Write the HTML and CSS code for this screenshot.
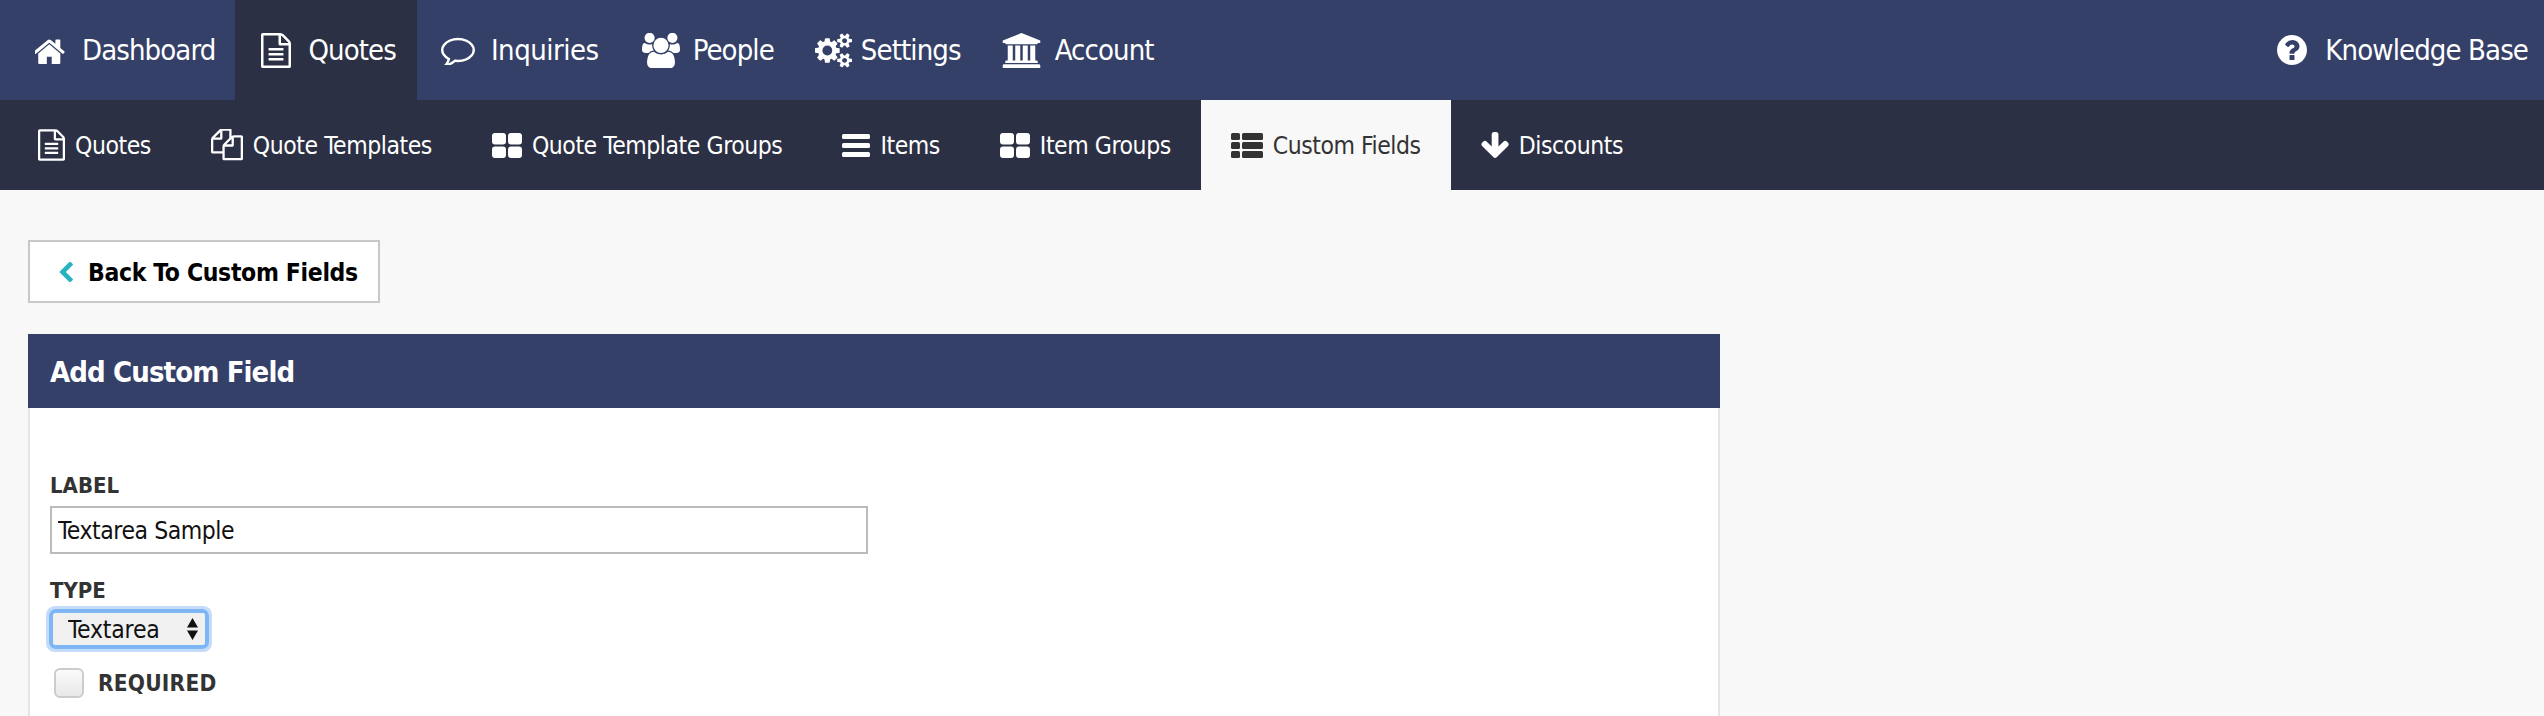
FILE: index.html
```html
<!DOCTYPE html>
<html lang="en">
<head>
<meta charset="utf-8">
<title>Add Custom Field</title>
<link rel="stylesheet" href="styles.css">
</head>
<body>
<svg class="sprite" xmlns="http://www.w3.org/2000/svg">
  <symbol id="i-home" viewBox="96 128 1600 1408"><path d="M1408 992v480q0 26-19 45t-45 19h-384v-384h-256v384h-384q-26 0-45-19t-19-45v-480q0-1 .5-3t.5-3l575-474 575 474q1 2 1 6zm223-69l-62 74q-8 9-21 11h-3q-13 0-21-7l-692-577-692 577q-12 8-24 7-13-2-21-11l-62-74q-8-10-7-23.5t11-21.5l719-599q32-26 76-26t76 26l244 204v-195q0-14 9-23t23-9h192q14 0 23 9t9 23v408l219 182q10 8 11 21.5t-7 23.5z"/></symbol>
  <symbol id="i-file" viewBox="128 0 1536 1792"><path d="M1596 380q28 28 48 76t20 88v1152q0 40-28 68t-68 28h-1344q-40 0-68-28t-28-68v-1600q0-40 28-68t68-28h896q40 0 88 20t76 48zm-444-244v376h376q-10-29-22-41l-313-313q-12-12-41-22zm384 1528v-1024h-416q-40 0-68-28t-28-68v-416h-768v1536h1280zm-1024-864q0-14 9-23t23-9h704q14 0 23 9t9 23v64q0 14-9 23t-23 9h-704q-14 0-23-9t-9-23v-64zm736 224q14 0 23 9t9 23v64q0 14-9 23t-23 9h-704q-14 0-23-9t-9-23v-64q0-14 9-23t23-9h704zm0 256q14 0 23 9t9 23v64q0 14-9 23t-23 9h-704q-14 0-23-9t-9-23v-64q0-14 9-23t23-9h704z"/></symbol>
  <symbol id="i-comment" viewBox="0 128 1792 1536"><path d="M896 384q-204 0-381.500 69.500t-282 187.500-104.500 255q0 112 71.500 213.500t201.500 175.500l87 50-27 96q-24 91-70 172 152-63 275-171l43-38 57 6q69 8 130 8 204 0 381.500-69.500t282-187.500 104.500-255-104.500-255-282-187.500-381.500-69.500zm896 512q0 174-120 321.500t-326 233-450 85.500q-70 0-145-8-198 175-460 242-49 14-114 22h-5q-15 0-27-10.500t-16-27.500v-1q-3-4-.5-12t2-10 4.500-9.500l6-9 7-8.500 8-9q7-8 31-34.500t34.500-38 31-39.500 32.500-51 27-59 26-76q-157-89-247.500-220t-90.500-281q0-174 120-321.500t326-233 450-85.500 450 85.500 326 233 120 321.500z"/></symbol>
  <symbol id="i-users" viewBox="0 64 1920 1664"><path d="M593 896q-162 5-265 128h-134q-82 0-138-40.500t-56-118.500q0-353 124-353 6 0 43.500 21t97.500 42.500 119 21.500q67 0 133-23-5 37-5 66 0 139 81 256zm1071 637q0 120-73 189.500t-194 69.500h-874q-121 0-194-69.500t-73-189.500q0-53 3.500-103.500t14-109 26.500-108.500 43-97.500 62-81 85.500-53.500 111.500-20q10 0 43 21.500t73 48 107 48 135 21.500 135-21.500 107-48 73-48 43-21.500q61 0 111.500 20t85.500 53.500 62 81 43 97.500 26.500 108.500 14 109 3.500 103.500zm-1024-1277q0 106-75 181t-181 75-181-75-75-181 75-181 181-75 181 75 75 181zm704 384q0 159-112.500 271.500t-271.500 112.500-271.500-112.500-112.500-271.500 112.500-271.500 271.500-112.500 271.500 112.500 112.500 271.500zm576 225q0 78-56 118.500t-138 40.500h-134q-103-123-265-128 81-117 81-256 0-29-5-66 66 23 133 23 59 0 119-21.500t97.500-42.500 43.500-21q124 0 124 353zm-128-609q0 106-75 181t-181 75-181-75-75-181 75-181 181-75 181 75 75 181z"/></symbol>
  <symbol id="i-cogs" viewBox="0 0 1920 1792"><path d="M896 896q0-106-75-181t-181-75-181 75-75 181 75 181 181 75 181-75 75-181zm768 512q0-52-38-90t-90-38-90 38-38 90q0 53 37.500 90.500t90.500 37.500 90.500-37.500 37.500-90.500zm0-1024q0-52-38-90t-90-38-90 38-38 90q0 53 37.500 90.500t90.500 37.500 90.500-37.500 37.500-90.500zm-384 421v185q0 10-7 19.500t-16 10.500l-155 24q-11 35-32 76 34 48 90 115 7 11 7 20 0 12-7 19-23 30-82.500 89.500t-78.500 59.500q-11 0-21-7l-115-90q-37 19-77 31-11 108-23 155-7 24-30 24h-186q-11 0-20-7.500t-10-17.500l-23-153q-34-10-75-31l-118 89q-7 7-20 7-11 0-21-8-144-133-144-160 0-9 7-19 10-14 41-53t47-61q-23-44-35-82l-152-24q-10-1-17-9.500t-7-19.500v-185q0-10 7-19.500t16-10.500l155-24q11-35 32-76-34-48-90-115-7-11-7-20 0-12 7-20 22-30 82-89t79-59q11 0 21 7l115 90q34-18 77-32 11-108 23-154 7-24 30-24h186q11 0 20 7.500t10 17.500l23 153q34 10 75 31l118-89q8-7 20-7 11 0 21 8 144 133 144 160 0 8-7 19-12 16-42 54t-45 60q23 48 34 82l152 23q10 2 17 10.500t7 19.500zm640 533v140q0 16-149 31-12 27-30 52 51 113 51 138 0 4-4 7-122 71-124 71-8 0-46-47t-52-68q-20 2-30 2t-30-2q-14 21-52 68t-46 47q-2 0-124-71-4-3-4-7 0-25 51-138-18-25-30-52-149-15-149-31v-140q0-16 149-31 13-29 30-52-51-113-51-138 0-4 4-7 4-2 35-20t59-34 30-16q8 0 46 46.500t52 67.500q20-2 30-2t30 2q51-71 92-112l6-2q4 0 124 70 4 3 4 7 0 25-51 138 17 23 30 52 149 15 149 31zm0-1024v140q0 16-149 31-12 27-30 52 51 113 51 138 0 4-4 7-122 71-124 71-8 0-46-47t-52-68q-20 2-30 2t-30-2q-14 21-52 68t-46 47q-2 0-124-71-4-3-4-7 0-25 51-138-18-25-30-52-149-15-149-31v-140q0-16 149-31 13-29 30-52-51-113-51-138 0-4 4-7 4-2 35-20t59-34 30-16q8 0 46 46.500t52 67.500q20-2 30-2t30 2q51-71 92-112l6-2q4 0 124 70 4 3 4 7 0 25-51 138 17 23 30 52 149 15 149 31z"/></symbol>
  <symbol id="i-bank" viewBox="0 0 1920 1792"><path d="M960 0l960 384v128h-128q0 26-20.500 45t-48.500 19h-1526q-28 0-48.500-19t-20.500-45h-128v-128zm-704 640h256v768h128v-768h256v768h128v-768h256v768h128v-768h256v768h59q28 0 48.500 19t20.500 45v64h-1664v-64q0-26 20.500-45t48.500-19h59v-768zm1595 960q28 0 48.500 19t20.500 45v128h-1920v-128q0-26 20.500-45t48.500-19h1782z"/></symbol>
  <symbol id="i-help" viewBox="128 128 1536 1536"><path d="M1024 1376v-192q0-14-9-23t-23-9h-192q-14 0-23 9t-9 23v192q0 14 9 23t23 9h192q14 0 23-9t9-23zm256-672q0-88-55.500-163t-138.500-116-170-41q-243 0-371 213-15 24 8 42l132 100q7 6 19 6 16 0 25-12 53-68 86-92 34-24 86-24 48 0 85.500 26t37.500 59q0 38-20 61t-68 45q-63 28-115.500 86.500t-52.500 125.500v36q0 14 9 23t23 9h192q14 0 23-9t9-23q0-19 21.500-49.500t54.500-49.500q32-18 49-28.500t46-35 44.500-48 28-60.500 12.500-81zm384 192q0 209-103 385.500t-279.500 279.500-385.500 103-385.500-103-279.500-279.500-103-385.500 103-385.500 279.500-279.500 385.500-103 385.500 103 279.500 279.500 103 385.500z"/></symbol>
  <symbol id="i-files" viewBox="0 128 1792 1664"><path d="M1696 384q40 0 68 28t28 68v1216q0 40-28 68t-68 28h-960q-40 0-68-28t-28-68v-288h-544q-40 0-68-28t-28-68v-672q0-40 20-88t48-76l408-408q28-28 76-48t88-20h416q40 0 68 28t28 68v328q68-40 128-40h416zm-544 213l-299 299h299v-299zm-640-384l-299 299h299v-299zm196 647l316-316v-416h-384v416q0 40-28 68t-68 28h-416v640h512v-256q0-40 20-88t48-76zm956 804v-1152h-384v416q0 40-28 68t-68 28h-416v640h896z"/></symbol>
  <symbol id="i-grid" viewBox="0 0 30 25"><rect width="14" height="11.500" rx="3"/><rect x="16" width="14" height="11.500" rx="3"/><rect y="13.500" width="14" height="11.500" rx="3"/><rect x="16" y="13.500" width="14" height="11.500" rx="3"/></symbol>
  <symbol id="i-bars" viewBox="0 0 28 23"><rect width="28" height="5" rx="1.500"/><rect y="9" width="28" height="5" rx="1.500"/><rect y="18" width="28" height="5" rx="1.500"/></symbol>
  <symbol id="i-list" viewBox="0 0 32 25"><rect width="9" height="7" rx="1.500"/><rect x="11" width="21" height="7" rx="1.500"/><rect y="9" width="9" height="7" rx="1.500"/><rect x="11" y="9" width="21" height="7" rx="1.500"/><rect y="18" width="9" height="7" rx="1.500"/><rect x="11" y="18" width="21" height="7" rx="1.500"/></symbol>
  <symbol id="i-down" viewBox="110 128 1565 1483"><path d="M1675 832q0 53-37 90l-651 652q-39 37-91 37-53 0-90-37l-651-652q-38-36-38-90 0-53 38-91l74-75q39-37 91-37 53 0 90 37l294 294v-704q0-52 38-90t90-38h128q52 0 90 38t38 90v704l294-294q37-37 90-37 52 0 91 37l75 75q37 39 37 91z"/></symbol>
  <symbol id="i-back" viewBox="365 128 1081 1408"><path d="M1427 301l-531 531 531 531q19 19 19 45t-19 45l-166 166q-19 19-45 19t-45-19l-742-742q-19-19-19-45t19-45l742-742q19-19 45-19t45 19l166 166q19 19 19 45t-19 45z"/></symbol>
</svg>

<header class="topnav">
  <a class="topnav__item topnav__item--first">
    <svg class="icon icon--home"><use href="#i-home"/></svg><span>Dashboard</span>
  </a>
  <a class="topnav__item topnav__item--active">
    <svg class="icon icon--topfile"><use href="#i-file"/></svg><span>Quotes</span>
  </a>
  <a class="topnav__item topnav__item--inquiries">
    <svg class="icon icon--comment"><use href="#i-comment"/></svg><span>Inquiries</span>
  </a>
  <a class="topnav__item topnav__item--people">
    <svg class="icon icon--users"><use href="#i-users"/></svg><span>People</span>
  </a>
  <a class="topnav__item topnav__item--settings">
    <svg class="icon icon--cogs"><use href="#i-cogs"/></svg><span>Settings</span>
  </a>
  <a class="topnav__item">
    <svg class="icon icon--bank"><use href="#i-bank"/></svg><span>Account</span>
  </a>
  <a class="topnav__item topnav__item--help">
    <svg class="icon icon--help"><use href="#i-help"/></svg><span>Knowledge Base</span>
  </a>
</header>

<nav class="subnav">
  <a class="subnav__item subnav__item--first"><svg class="icon icon--subfile"><use href="#i-file"/></svg><span>Quotes</span></a>
  <a class="subnav__item"><svg class="icon icon--files"><use href="#i-files"/></svg><span>Quote Templates</span></a>
  <a class="subnav__item"><svg class="icon icon--grid"><use href="#i-grid"/></svg><span>Quote Template Groups</span></a>
  <a class="subnav__item"><svg class="icon icon--bars"><use href="#i-bars"/></svg><span>Items</span></a>
  <a class="subnav__item"><svg class="icon icon--grid"><use href="#i-grid"/></svg><span>Item Groups</span></a>
  <a class="subnav__item subnav__item--active"><svg class="icon icon--list"><use href="#i-list"/></svg><span>Custom Fields</span></a>
  <a class="subnav__item"><svg class="icon icon--down"><use href="#i-down"/></svg><span>Discounts</span></a>
</nav>

<main class="content">
  <a class="back-button"><svg class="icon icon--back"><use href="#i-back"/></svg><span>Back To Custom Fields</span></a>

  <section class="panel">
    <h2 class="panel__title">Add Custom Field</h2>
    <form class="panel__body">
      <label class="field-label" for="label">LABEL</label>
      <input class="text-input" id="label" type="text" value="Textarea Sample">
      <label class="field-label field-label--type" for="type">TYPE</label>
      <div class="select-box">
        <select class="select-box__control" id="type"><option>Textarea</option></select>
        <svg class="select-box__arrows" viewBox="0 0 11 22"><path d="M5.500 0L11 9.500H0zM0 12.500h11L5.500 22z"/></svg>
      </div>
      <label class="check-row">
        <input class="check-row__box" type="checkbox">
        <span class="check-row__text">REQUIRED</span>
      </label>
    </form>
  </section>
</main>
</body>
</html>
```

FILE: styles.css
```css
* { box-sizing: border-box; }
html, body { margin: 0; height: 100%; overflow: hidden; }
body {
  display: flex;
  flex-direction: column;
  background: #f8f8f8;
  color: #333;
  font-family: "DejaVu Sans Condensed", "DejaVu Sans", sans-serif;
}
.sprite { width: 0; height: 0; position: absolute; }
.icon { fill: currentColor; flex: none; display: block; }

.topnav { display: flex; height: 100px; background: #354068; color: #fff; font-size: 29px; letter-spacing: -0.9px; }
.topnav__item { display: flex; align-items: center; padding: 0 20px 0 21px; gap: 14px; }
.topnav__item--first { padding-left: 35px; gap: 16px; padding-right: 20px; }
.topnav__item--active { background: #2c3044; padding: 0 21px 0 26px; gap: 17px; }
.topnav__item--inquiries { padding: 0 22px 0 24px; gap: 16px; letter-spacing: -0.5px; }
.topnav__item--people { gap: 13px; }
.topnav__item--settings { gap: 9px; }
.topnav__item--help { margin-left: auto; padding-right: 16px; gap: 18px; }

.icon--home { width: 31px; height: 27px; }
.icon--topfile { width: 30px; height: 35px; }
.icon--comment { width: 34px; height: 30px; }
.icon--users { width: 38px; height: 35px; }
.icon--cogs { width: 37px; height: 35px; }
.icon--bank { width: 39px; height: 35px; }
.icon--help { width: 30px; height: 30px; }

.subnav { display: flex; height: 90px; background: #2c3044; color: #fff; font-size: 24.5px; letter-spacing: -0.44px; }
.subnav__item { display: flex; align-items: center; gap: 10px; padding: 0 30px; }
.subnav__item--first { padding-left: 38px; }
.subnav__item--active { background: #f8f8f8; color: #333; }

.icon--subfile { width: 27px; height: 32px; }
.icon--files { width: 32px; height: 33px; }
.icon--grid { width: 30px; height: 25px; }
.icon--bars { width: 28px; height: 23px; }
.icon--list { width: 32px; height: 25px; }
.icon--down { width: 28px; height: 26px; }

.content { flex: 1; display: flex; flex-direction: column; align-items: flex-start; padding: 50px 824px 0 28px; min-height: 0; }

.back-button {
  display: flex;
  align-items: center;
  gap: 15px;
  width: 352px;
  height: 63px;
  padding: 1px 0 0 29px;
  background: #fff;
  border: 2px solid #c8c8c8;
  color: #000;
  font-size: 24.5px;
  font-weight: 700;
  letter-spacing: -0.34px;
}
.icon--back { width: 14px; height: 20px; color: #26b5c0; }

.panel { flex: 1; width: 100%; margin-top: 31px; display: flex; flex-direction: column; background: #fff; }
.panel__title {
  margin: 0;
  height: 74px;
  padding: 2px 22px 0;
  display: flex;
  align-items: center;
  background: #354068;
  color: #fff;
  font-size: 29px;
  font-weight: 700;
  letter-spacing: -0.9px;
}
.panel__body {
  flex: 1;
  display: flex;
  flex-direction: column;
  align-items: flex-start;
  padding: 63px 20px 0;
  border: 2px solid #e6e6e6;
  border-width: 0 2px;
}

.field-label { font-size: 22px; font-weight: 700; line-height: 30px; color: #333; }
.field-label--type { margin-top: 22px; }

.text-input {
  display: block;
  width: 818px;
  height: 48px;
  margin-top: 5px;
  padding: 0 6px;
  border: 2px solid #bbb;
  background: #fff;
  color: #111;
  font: 400 24.5px "DejaVu Sans Condensed", "DejaVu Sans", sans-serif;
  letter-spacing: -0.45px;
}

.select-box {
  position: relative;
  width: 152px;
  height: 32px;
  margin: 7px 0 0 3px;
  border-radius: 3px;
  box-shadow: 0 0 0 4px #7db5f5, 0 0 0 7px #c4dcfa;
}
.select-box__control {
  display: block;
  width: 100%;
  height: 100%;
  padding: 0 36px 0 15px;
  appearance: none;
  border: 0;
  border-radius: 3px;
  background: #f0f0f0;
  color: #111;
  outline: 0;
  font: 400 24.5px "DejaVu Sans Condensed", "DejaVu Sans", sans-serif;
  letter-spacing: -0.2px;
}
.select-box__arrows { position: absolute; top: 5px; right: 7px; width: 11px; height: 22px; fill: #111; }

.check-row { display: flex; align-items: center; gap: 14px; margin: 23px 0 0 4px; }
.check-row__box {
  appearance: none;
  width: 30px;
  height: 30px;
  margin: 0;
  border: 2px solid #ccc;
  border-radius: 6px;
  background: linear-gradient(#fbfbfb, #e8e8e8);
}
.check-row__text { font-size: 22.5px; font-weight: 700; letter-spacing: 0.2px; color: #333; }
```
